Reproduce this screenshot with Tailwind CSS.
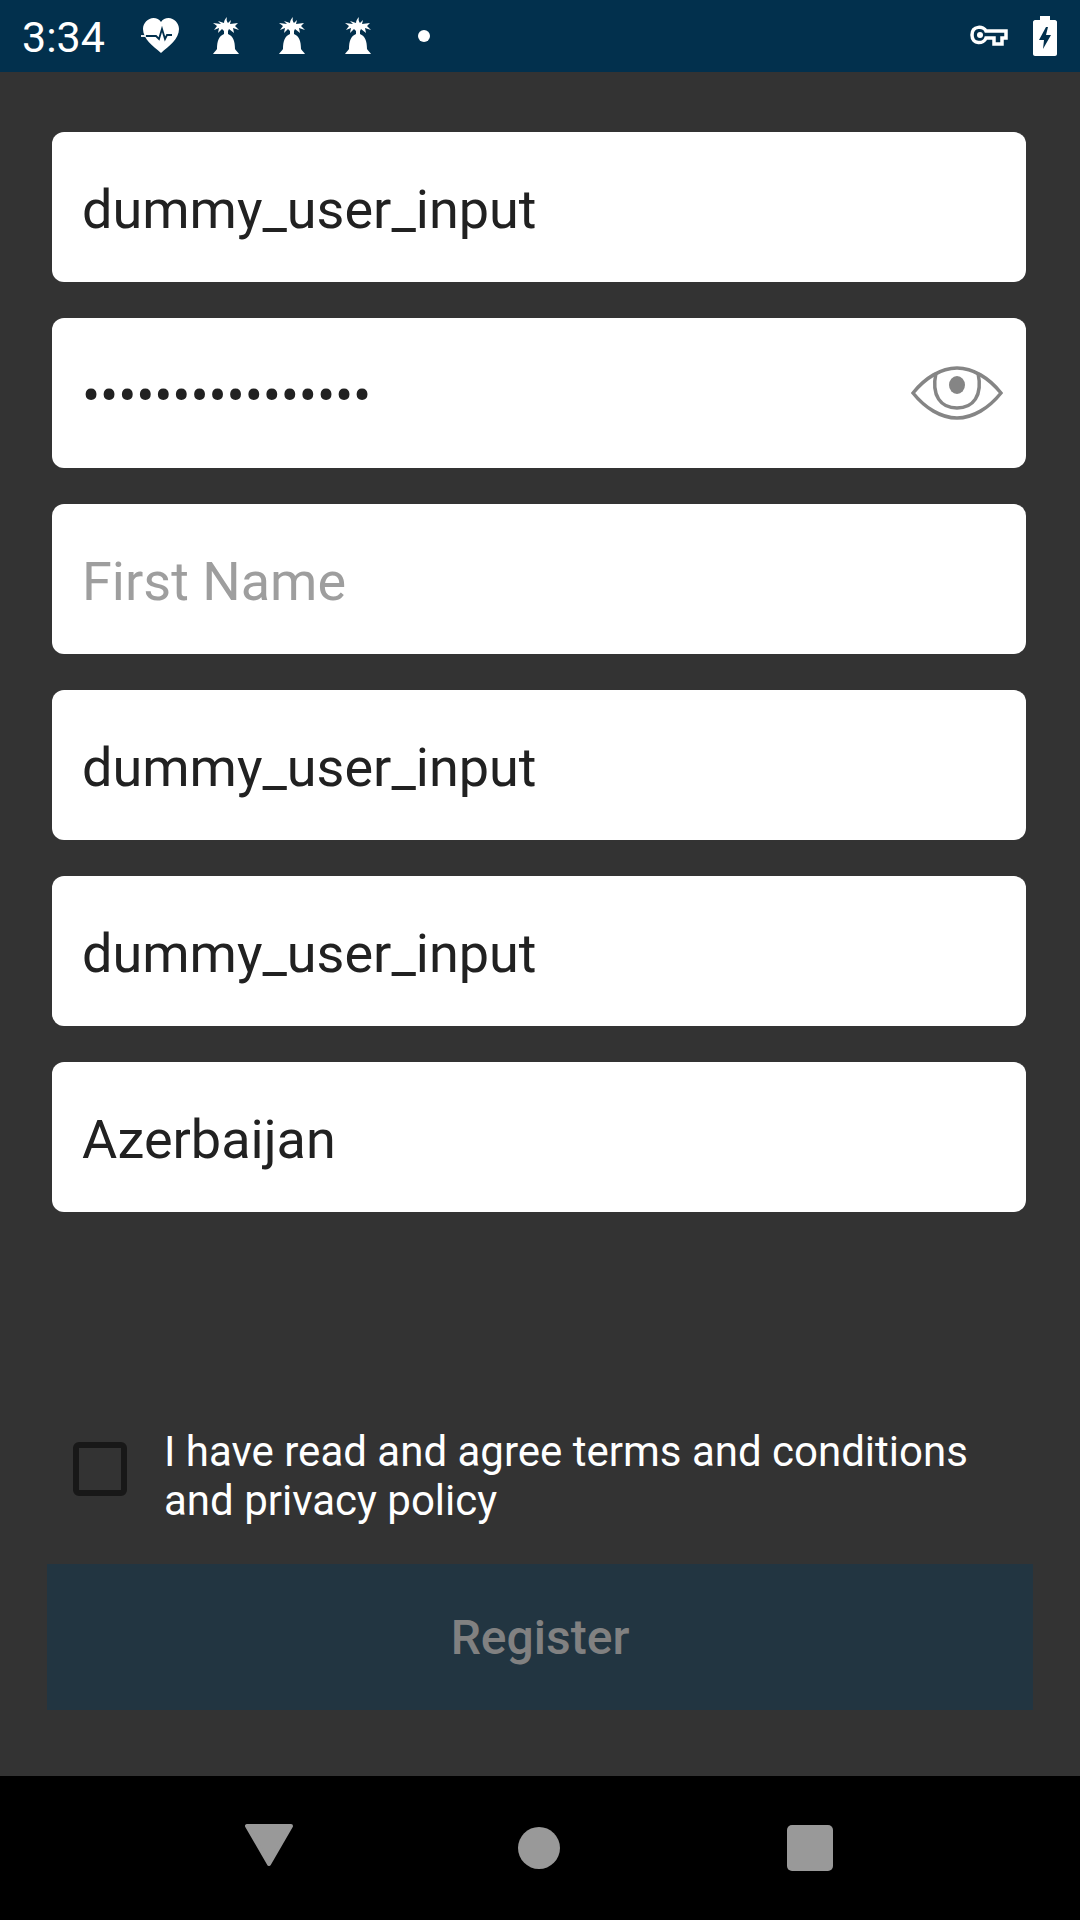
<!DOCTYPE html>
<html>
<head>
<meta charset="utf-8">
<script src="https://cdn.jsdelivr.net/npm/@tailwindcss/browser@4"></script>
</head>
<body class="m-0">
<div class="w-[1080px] h-[1920px] flex flex-col bg-[#333333] font-['Roboto',sans-serif] overflow-hidden">
  <div class="h-[72px] bg-[#02304d] flex items-center text-white shrink-0">
    <span class="ml-[22px] text-[43px] leading-none w-[116px] mt-[3px]">3:34</span>
    <svg class="ml-[3px]" width="40" height="36" viewBox="0 0 40 36"><path fill="#fff" d="M20 35 C12 28 2 21 2 11 C2 5 7 0 12.500 0 C15.500 0 18.500 1.500 20 4 C21.500 1.500 24.500 0 27.500 0 C33 0 38 5 38 11 C38 21 28 28 20 35Z"/><path fill="none" stroke="#02304d" stroke-width="1.800" d="M0 18 H15 L18 21 L21 11 L24 21 L26 17 H31"/><path stroke="#fff" stroke-width="1.800" d="M0 18 H5"/></svg>
    <svg class="ml-[32px]" width="26" height="38" viewBox="0 0 26 38"><path fill="#fff" d="M14 0 C13 3 14 5 15 6 L18 3 L17 7 L25 6 L22 9 L26 13 L20 11 L21 16 L16 12 L15 14 V17 C20 19 22 24 22 32 C23 34 25 35 26 37 H0 C1 35 3 34 4 32 C4 24 6 19 11 17 V14 L9 12 L5 16 L6 11 L1 13 L4 9 L0 6 L8 7 L5 4 L11 6 C11 4 12 2 14 0Z"/></svg>
    <svg class="ml-[40px]" width="26" height="38" viewBox="0 0 26 38"><path fill="#fff" d="M14 0 C13 3 14 5 15 6 L18 3 L17 7 L25 6 L22 9 L26 13 L20 11 L21 16 L16 12 L15 14 V17 C20 19 22 24 22 32 C23 34 25 35 26 37 H0 C1 35 3 34 4 32 C4 24 6 19 11 17 V14 L9 12 L5 16 L6 11 L1 13 L4 9 L0 6 L8 7 L5 4 L11 6 C11 4 12 2 14 0Z"/></svg>
    <svg class="ml-[40px]" width="26" height="38" viewBox="0 0 26 38"><path fill="#fff" d="M14 0 C13 3 14 5 15 6 L18 3 L17 7 L25 6 L22 9 L26 13 L20 11 L21 16 L16 12 L15 14 V17 C20 19 22 24 22 32 C23 34 25 35 26 37 H0 C1 35 3 34 4 32 C4 24 6 19 11 17 V14 L9 12 L5 16 L6 11 L1 13 L4 9 L0 6 L8 7 L5 4 L11 6 C11 4 12 2 14 0Z"/></svg>
    <div class="ml-[47px] w-[12px] h-[12px] rounded-full bg-white"></div>
    <svg class="ml-auto" width="38" height="22" viewBox="0 0 38 22"><path fill="none" stroke="#fff" stroke-width="3.500" d="M16 6 H36 V13 H32 V19 H24 V13 H16 C14 19 2 20 2 10 C2 0 14 1 16 6Z"/><circle cx="10" cy="10" r="3" fill="#fff"/></svg>
    <svg class="ml-[25px] mr-[23px]" width="24" height="40" viewBox="0 0 24 40"><path fill="#fff" d="M7 0 H17 V4 H22 C23 4 24 5 24 6 V38 C24 39 23 40 22 40 H2 C1 40 0 39 0 38 V6 C0 5 1 4 2 4 H7Z"/><path fill="#02304d" d="M13 11 L6 24 H11 L10 33 L18 19 H13 L15 11Z"/></svg>
  </div>

  <div class="flex-1 flex flex-col pl-[52px] pr-[54px] pt-[60px]">
    <div class="flex flex-col gap-[36px] text-[#212121] text-[54px]">
      <div class="h-[150px] rounded-[12px] bg-white flex items-center pl-[30px] pt-[4px]">dummy_user_input</div>
      <div class="h-[150px] rounded-[12px] bg-white flex items-center pl-[30px] pt-[4px] relative">
        <span class="tracking-[-0.15px]">••••••••••••••••</span>
        <svg class="absolute right-[23px] top-[48px]" width="92" height="54" viewBox="0 0 92 54" fill="none" stroke="#858585" stroke-width="3.500"><path d="M2 27 C14 12 30 2 46 2 C62 2 78 12 90 27 C78 42 62 52 46 52 C30 52 14 42 2 27Z"/><path d="M25 7 C20 30 30 42 46 42 C62 42 72 30 67 7"/><ellipse cx="46" cy="19" rx="8" ry="9" fill="#858585" stroke="none"/></svg>
      </div>
      <div class="h-[150px] rounded-[12px] bg-white flex items-center pl-[30px] pt-[4px] text-[#9e9e9e]">First Name</div>
      <div class="h-[150px] rounded-[12px] bg-white flex items-center pl-[30px] pt-[4px]">dummy_user_input</div>
      <div class="h-[150px] rounded-[12px] bg-white flex items-center pl-[30px] pt-[4px]">dummy_user_input</div>
      <div class="h-[150px] rounded-[12px] bg-white flex items-center pl-[30px] pt-[4px]">Azerbaijan</div>
    </div>

    <div class="flex items-start mt-[217px] ml-[21px]">
      <div class="mt-[13px] w-[54px] h-[54px] rounded-[6px] border-[6px] border-[#181818] shrink-0"></div>
      <p class="ml-[37px] -mt-[2px] text-white text-[42px] leading-[49px] w-[830px]">I have read and agree terms and conditions and privacy policy</p>
    </div>

    <div class="mt-[39px] -ml-[5px] -mr-[7px] h-[146px] pt-[2px] bg-[#223541] flex items-center justify-center text-[#818181] text-[48px] font-medium">Register</div>
  </div>

  <div class="h-[144px] bg-black shrink-0 relative">
    <div class="flex items-center h-full">
      <svg class="ml-[244px] -mt-[6px]" width="50" height="44" viewBox="0 0 50 44"><path fill="#999" stroke="#999" stroke-width="4" stroke-linejoin="round" d="M3 3 H47 L25 41Z"/></svg>
      <div class="ml-[224px] w-[42px] h-[42px] rounded-full bg-[#999]"></div>
      <div class="ml-[227px] w-[46px] h-[46px] rounded-[5px] bg-[#999]"></div>
    </div>
  </div>
</div>
</body>
</html>
